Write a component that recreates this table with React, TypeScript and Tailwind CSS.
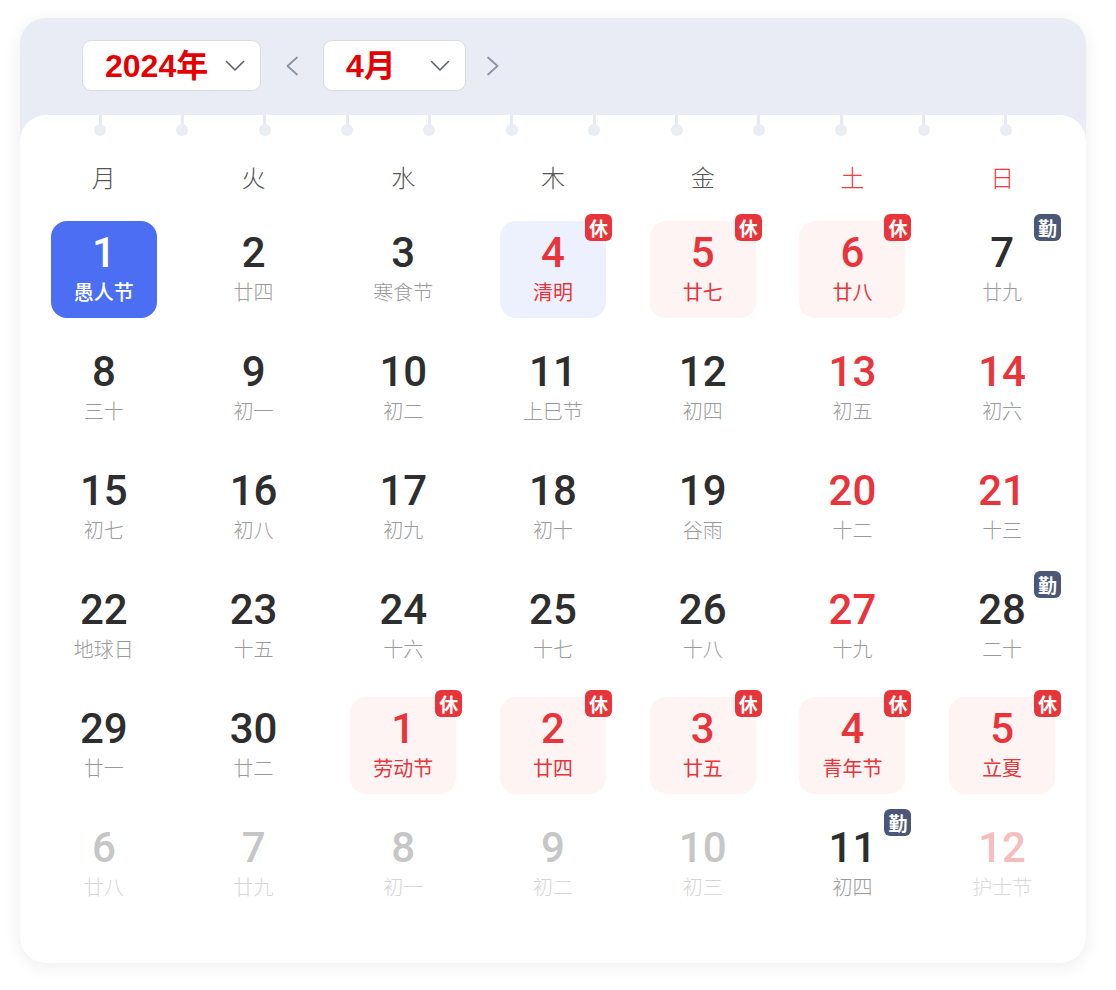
import React from "react";

type Kind =
  | "normal"
  | "weekend"
  | "selected"
  | "today"
  | "rest"
  | "work"
  | "other"
  | "otherWeekend"
  | "otherWork";

type Day = { n: number; l: string; k: Kind; badge?: "休" | "勤" };

const rows: Day[][] = [
  [
    { n: 1, l: "愚人节", k: "selected" },
    { n: 2, l: "廿四", k: "normal" },
    { n: 3, l: "寒食节", k: "normal" },
    { n: 4, l: "清明", k: "today", badge: "休" },
    { n: 5, l: "廿七", k: "rest", badge: "休" },
    { n: 6, l: "廿八", k: "rest", badge: "休" },
    { n: 7, l: "廿九", k: "work", badge: "勤" },
  ],
  [
    { n: 8, l: "三十", k: "normal" },
    { n: 9, l: "初一", k: "normal" },
    { n: 10, l: "初二", k: "normal" },
    { n: 11, l: "上巳节", k: "normal" },
    { n: 12, l: "初四", k: "normal" },
    { n: 13, l: "初五", k: "weekend" },
    { n: 14, l: "初六", k: "weekend" },
  ],
  [
    { n: 15, l: "初七", k: "normal" },
    { n: 16, l: "初八", k: "normal" },
    { n: 17, l: "初九", k: "normal" },
    { n: 18, l: "初十", k: "normal" },
    { n: 19, l: "谷雨", k: "normal" },
    { n: 20, l: "十二", k: "weekend" },
    { n: 21, l: "十三", k: "weekend" },
  ],
  [
    { n: 22, l: "地球日", k: "normal" },
    { n: 23, l: "十五", k: "normal" },
    { n: 24, l: "十六", k: "normal" },
    { n: 25, l: "十七", k: "normal" },
    { n: 26, l: "十八", k: "normal" },
    { n: 27, l: "十九", k: "weekend" },
    { n: 28, l: "二十", k: "work", badge: "勤" },
  ],
  [
    { n: 29, l: "廿一", k: "normal" },
    { n: 30, l: "廿二", k: "normal" },
    { n: 1, l: "劳动节", k: "rest", badge: "休" },
    { n: 2, l: "廿四", k: "rest", badge: "休" },
    { n: 3, l: "廿五", k: "rest", badge: "休" },
    { n: 4, l: "青年节", k: "rest", badge: "休" },
    { n: 5, l: "立夏", k: "rest", badge: "休" },
  ],
  [
    { n: 6, l: "廿八", k: "other" },
    { n: 7, l: "廿九", k: "other" },
    { n: 8, l: "初一", k: "other" },
    { n: 9, l: "初二", k: "other" },
    { n: 10, l: "初三", k: "other" },
    { n: 11, l: "初四", k: "otherWork", badge: "勤" },
    { n: 12, l: "护士节", k: "otherWeekend" },
  ],
];

const boxCls: Record<Kind, string> = {
  normal: "",
  weekend: "",
  selected: "bg-[#4b6ef2]",
  today: "bg-[#edf1fe]",
  rest: "bg-[#fdf4f3]",
  work: "",
  other: "",
  otherWeekend: "",
  otherWork: "",
};

const numCls: Record<Kind, string> = {
  normal: "text-[#2e2e2e]",
  weekend: "text-[#e8343a]",
  selected: "text-white",
  today: "text-[#e8343a]",
  rest: "text-[#e8343a]",
  work: "text-[#2e2e2e]",
  other: "text-[#c6c6c6]",
  otherWeekend: "text-[#f8bcbc]",
  otherWork: "text-[#2e2e2e]",
};

const lunarCls: Record<Kind, string> = {
  normal: "text-[#9a9a9a] font-light",
  weekend: "text-[#9a9a9a] font-light",
  selected: "text-white font-medium",
  today: "text-[#e8343a]",
  rest: "text-[#e8343a]",
  work: "text-[#9a9a9a] font-light",
  other: "text-[#d6d6d6] font-light",
  otherWeekend: "text-[#dadada] font-light",
  otherWork: "text-[#9a9a9a] font-light",
};

const weekdays = ["月", "火", "水", "木", "金", "土", "日"];

function Down() {
  return (
    <svg width="20" height="12" viewBox="0 0 20 12" fill="none">
      <polyline
        points="1.5,1.5 10,10 18.5,1.5"
        stroke="#5b6275"
        strokeWidth="1.6"
        strokeLinecap="round"
        strokeLinejoin="round"
      />
    </svg>
  );
}

function Arrow({ dir }: { dir: "l" | "r" }) {
  return (
    <svg width="14" height="20" viewBox="0 0 14 20" fill="none">
      <polyline
        points={dir === "l" ? "12,1.5 2.5,10 12,18.5" : "2,1.5 11.5,10 2,18.5"}
        stroke="#8c92a2"
        strokeWidth="1.7"
        strokeLinecap="round"
        strokeLinejoin="round"
      />
    </svg>
  );
}

function Cell({ d }: { d: Day }) {
  return (
    <div className="flex justify-center">
      <div
        className={`relative flex h-[97px] w-[106px] flex-col items-center rounded-[16px] pt-[14px] ${boxCls[d.k]}`}
      >
        <div
          className={`h-[36px] text-[42px] leading-[36px] font-medium ${numCls[d.k]}`}
          style={{ fontFamily: 'Roboto, "DejaVu Sans Condensed", sans-serif' }}
        >
          {d.n}
        </div>
        <div className={`mt-[9px] h-[24px] text-[20px] leading-[24px] ${lunarCls[d.k]}`}>
          {d.l}
        </div>
        {d.badge && (
          <div
            className={`absolute -top-[7px] -right-[6px] flex h-[27px] w-[27px] items-center justify-center rounded-[6px] text-[19px] leading-none font-bold text-white ${
              d.badge === "休" ? "bg-[#e8353a]" : "bg-[#4b5777]"
            }`}
          >
            {d.badge}
          </div>
        )}
      </div>
    </div>
  );
}

export default function App() {
  return (
    <div
      className="min-h-[990px] bg-white pt-[18px] pl-[20px]"
      style={{ fontFamily: '"Noto Sans CJK SC", "Noto Sans", sans-serif' }}
    >
      <div className="flex h-[945px] w-[1066px] flex-col overflow-hidden rounded-[26px] bg-[#e9ecf4] shadow-[0_4px_18px_rgba(0,0,0,0.07)]">
        {/* header */}
        <div className="flex h-[97px] shrink-0 items-start pt-[22px] pl-[62px]">
          <div className="flex h-[51px] w-[179px] items-center justify-between rounded-[9px] border border-[#d9dce4] bg-white pr-[15px] pl-[22px]">
            <span
              className="text-[32px] leading-none font-bold text-[#e50000]"
              style={{ fontFamily: '"Liberation Sans", "Noto Sans CJK SC", sans-serif' }}
            >
              2024年
            </span>
            <Down />
          </div>
          <div className="flex h-[51px] w-[62px] items-center justify-center">
            <Arrow dir="l" />
          </div>
          <div className="flex h-[51px] w-[143px] items-center justify-between rounded-[9px] border border-[#d9dce4] bg-white pr-[15px] pl-[22px]">
            <span
              className="text-[32px] leading-none font-bold text-[#e50000]"
              style={{ fontFamily: '"Liberation Sans", "Noto Sans CJK SC", sans-serif' }}
            >
              4月
            </span>
            <Down />
          </div>
          <div className="flex h-[51px] w-[54px] items-center justify-center">
            <Arrow dir="r" />
          </div>
        </div>

        {/* body */}
        <div className="relative flex-1 rounded-t-[26px] bg-white px-[9px]">
          <div className="flex justify-between px-[65px]">
            {Array.from({ length: 12 }).map((_, i) => (
              <div key={i} className="flex w-[12px] flex-col items-center">
                <div className="h-[10px] w-[3px] bg-[#e6e9f1]" />
                <div className="-mt-[1px] h-[12px] w-[12px] rounded-full bg-[#eaedf4]" />
              </div>
            ))}
          </div>

          <div className="mt-[26px] grid grid-cols-7">
            {weekdays.map((w, i) => (
              <div
                key={w}
                className={`text-center text-[24px] leading-[30px] font-light ${
                  i >= 5 ? "text-[#f53a3f]" : "text-[#555555]"
                }`}
              >
                {w}
              </div>
            ))}
          </div>

          <div className="mt-[29px] grid grid-cols-7 gap-y-[22px]">
            {rows.flat().map((d, i) => (
              <Cell key={i} d={d} />
            ))}
          </div>
        </div>
      </div>
    </div>
  );
}
